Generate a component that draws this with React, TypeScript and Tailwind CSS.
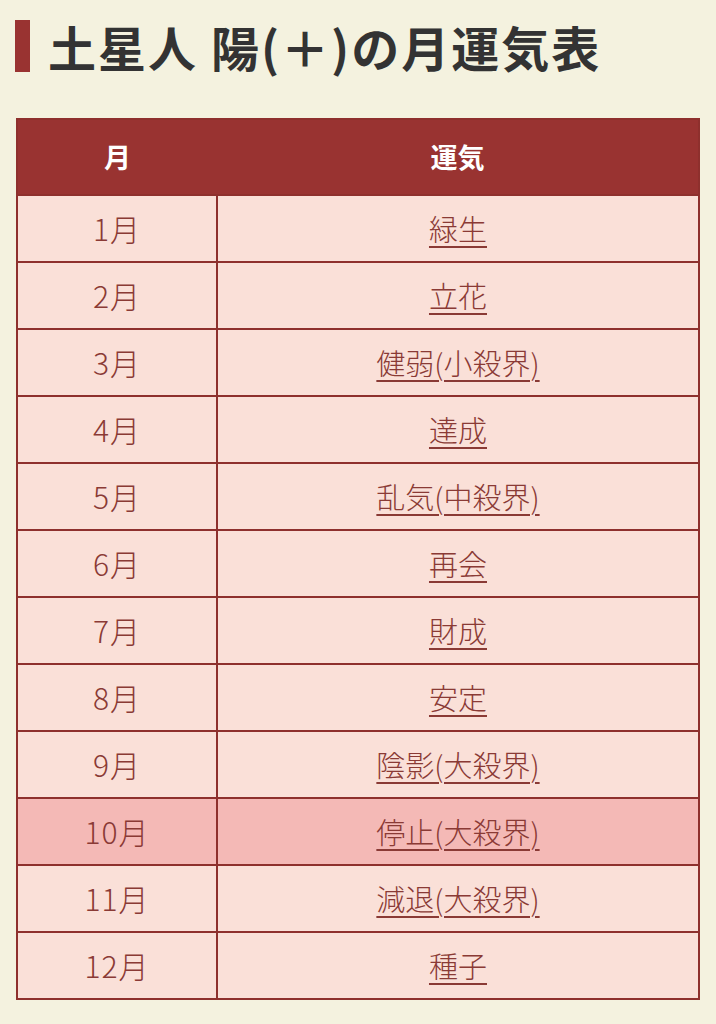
import React from 'react';

const rows = [
  { month: '1月', luck: '緑生' },
  { month: '2月', luck: '立花' },
  { month: '3月', luck: '健弱(小殺界)' },
  { month: '4月', luck: '達成' },
  { month: '5月', luck: '乱気(中殺界)' },
  { month: '6月', luck: '再会' },
  { month: '7月', luck: '財成' },
  { month: '8月', luck: '安定' },
  { month: '9月', luck: '陰影(大殺界)' },
  { month: '10月', luck: '停止(大殺界)', current: true },
  { month: '11月', luck: '減退(大殺界)' },
  { month: '12月', luck: '種子' },
];

const font = { fontFamily: '"Noto Sans CJK JP", "Noto Sans", sans-serif' };

const App = () => {
  return (
    <div className="min-h-[1024px] w-[716px] bg-[#f4f2df] px-4 pt-5" style={font}>
      <h2 className="flex items-center gap-[18px] -ml-px">
        <span className="block h-[52px] w-[15px] shrink-0 bg-[#993331]" />
        <span className="text-[48px] font-bold leading-[52px] tracking-[2px] text-[#333333]">
          土星人 陽(＋)の月運気表
        </span>
      </h2>

      <table className="mt-[46px] w-full border-collapse border-2 border-[#8e302d]" style={font}>
        <thead>
          <tr className="h-[76px] bg-[#993331] text-white">
            <th className="w-[200px] text-[27px] font-bold">月</th>
            <th className="text-[27px] font-bold">運気</th>
          </tr>
        </thead>
        <tbody>
          {rows.map((row) => (
            <tr
              key={row.month}
              className={row.current ? 'h-[67px] bg-[#f4b9b6]' : 'h-[67px] bg-[#fae0d8]'}
            >
              <td className="border-2 border-[#8e302d] text-center text-[30px] font-light tracking-[1px] text-[#8a3a35]">
                {row.month}
              </td>
              <td className="border-2 border-[#8e302d] text-center text-[29px] font-light">
                <a href="#" className="text-[#8a3a35] underline underline-offset-[5px] decoration-[1.5px]">
                  {row.luck}
                </a>
              </td>
            </tr>
          ))}
        </tbody>
      </table>
    </div>
  );
};

export default App;
